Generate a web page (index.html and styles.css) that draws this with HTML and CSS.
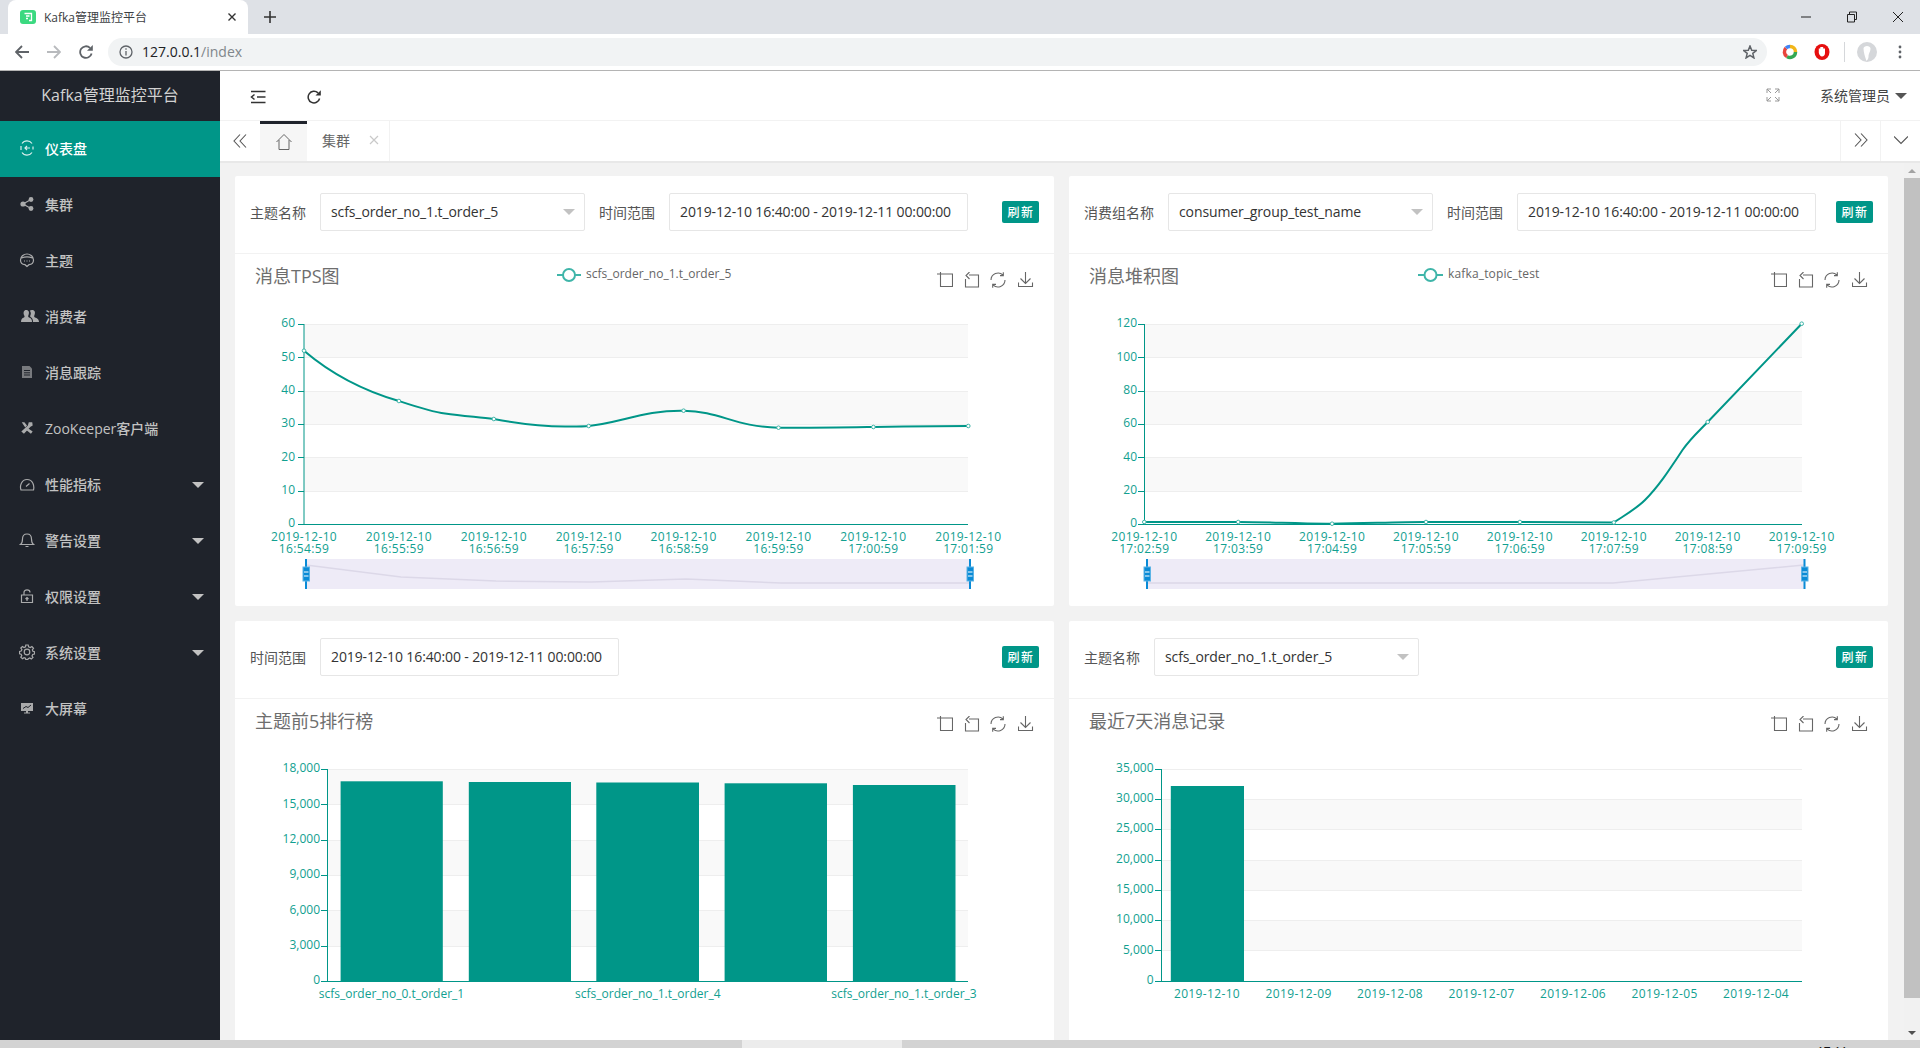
FILE: index.html
```html
<!DOCTYPE html>
<html lang="zh-CN">
<head>
<meta charset="utf-8">
<title>Kafka管理监控平台</title>
<link rel="stylesheet" href="styles.css">
</head>
<body>
<svg class="defs" width="0" height="0">
  <symbol id="tb-zoom" viewBox="0 0 16 16"><path d="M3.5 0V14.5H15.5V2H0"/></symbol>
  <symbol id="tb-back" viewBox="0 0 16 16"><path d="M5 3H14.5V15H1.500V7M5.500 0L2 3.500L5.500 7"/></symbol>
  <symbol id="tb-restore" viewBox="0 0 16 16"><path d="M1 8A7 7 0 0 1 13 3.200M15 8A7 7 0 0 1 3 12.800M13.300 .3V3.600H10M2.700 15.700V12.400H6"/></symbol>
  <symbol id="tb-save" viewBox="0 0 16 16"><path d="M7.500 0V11.500M2.500 6.500L7.500 11.500L12.500 6.500M.5 10.500V14.500H14.500V10.500"/></symbol>
</svg>

<div class="strip">
  <div class="tab-active">
    <svg class="favicon" viewBox="0 0 16 14"><rect width="16" height="14" rx="3" fill="#3bd980"/><path d="M4.500 3.500H11.500V10.500H9M6 6H9.500M6 8.500H8" fill="none" stroke="#fff" stroke-width="1.300"/></svg>
    <span class="tab-title">Kafka管理监控平台</span>
    <svg class="tab-x" viewBox="0 0 8 8"><path d="M.5 .5L7.500 7.500M7.500 .5L.5 7.500"/></svg>
  </div>
  <svg class="tab-plus" viewBox="0 0 12 12"><path d="M6 0V12M0 6H12"/></svg>
  <div class="win">
    <svg viewBox="0 0 12 12"><path d="M1 6H11"/></svg>
    <svg viewBox="0 0 12 12"><path d="M1.500 3.500H8.500V11H1.500ZM3.500 3.500V1H10.500V8.500H8.500"/></svg>
    <svg viewBox="0 0 12 12"><path d="M1 1L11 11M11 1L1 11"/></svg>
  </div>
</div>

<div class="toolbar">
  <svg class="nav-ic" viewBox="0 0 14 14"><path d="M14 7H1.500M7 1L1 7L7 13"/></svg>
  <svg class="nav-ic nav-off" viewBox="0 0 14 14"><path d="M0 7H12.500M7 1L13 7L7 13"/></svg>
  <svg class="nav-ic" viewBox="0 0 14 14"><path d="M12.600 8.500A5.800 5.800 0 1 1 11 2.900"/><path class="solid" d="M8 5.800H13.800V0Z"/></svg>
  <div class="omnibox">
    <svg class="info" viewBox="0 0 14 14"><circle cx="7" cy="7" r="6"/><path d="M7 6V10.500M7 3.200V4.800"/></svg>
    <span class="url">127.0.0.1<em>/index</em></span>
    <svg class="star" viewBox="0 0 14 14"><path d="M7 1L8.700 5.200L13.300 5.500L9.800 8.400L10.900 12.900L7 10.400L3.100 12.900L4.200 8.400L.7 5.500L5.300 5.200Z"/></svg>
  </div>
  <svg class="ext ext-ring" viewBox="0 0 16 16"><path d="M8 2.500A5.500 5.500 0 0 1 13.500 8" stroke="#f2b619"/><path d="M13.500 8A5.500 5.500 0 0 1 5 12.600" stroke="#33a853"/><path d="M5 12.600A5.500 5.500 0 0 1 4 4" stroke="#e8453c"/><path d="M4 4A5.500 5.500 0 0 1 8 2.500" stroke="#4285f4"/></svg>
  <svg class="ext ext-stop" viewBox="0 0 16 16"><ellipse cx="8" cy="8" rx="7.500" ry="8" fill="#e60f0f"/><path d="M4.800 7V4.500H6.300V3H9.200V4.500H11V9C11 11.200 9.800 12.500 8 12.500C6.500 12.500 5.500 11 4.800 9Z" fill="#fff"/></svg>
  <span class="sep"></span>
  <svg class="avatar" viewBox="0 0 20 20"><ellipse cx="10" cy="10" rx="10" ry="10" fill="#d5d7da"/><path d="M6.500 6.500C6.500 3 13.500 3 13.500 6.500C13.500 10 11.500 11 11.500 15C11.500 17 10 18 9.500 19C8 15 6.500 10 6.500 6.500Z" fill="#fff"/></svg>
  <svg class="dots" viewBox="0 0 4 14"><circle cx="2" cy="2" r="1.400"/><circle cx="2" cy="7" r="1.400"/><circle cx="2" cy="12" r="1.400"/></svg>
</div>

<div class="app">
  <aside class="sidebar">
    <div class="logo">Kafka管理监控平台</div>
    <nav class="menu">
      <a class="item active"><svg class="mi" viewBox="0 0 16 16"><path class="st" d="M13 3.500A6 6 0 0 0 3 3.500M3 12.500A6 6 0 0 0 13 12.500M2 6V10M14 6.500V9.500M11 8H6M8 6L6 8L8 10"/></svg><span>仪表盘</span></a>
      <a class="item"><svg class="mi" viewBox="0 0 16 16"><circle cx="12" cy="3.500" r="2.400"/><circle cx="12" cy="12.500" r="2.400"/><circle cx="4" cy="8" r="2.600"/><path class="st" d="M12 3.500L4 8L12 12.500" stroke-width="1.400"/></svg><span>集群</span></a>
      <a class="item"><svg class="mi" viewBox="0 0 16 16"><path class="st" d="M8 14.500L6 12.700C3 12.500 1.500 10.500 1.500 8A6.500 6 0 0 1 14.500 8C14.500 10.500 13 12.500 10 12.700ZM2.500 6C6 4.500 10 4.500 13.500 6"/><path class="st" d="M5 9H6M7.500 9H8.500M10 9H11" stroke-width="1.500"/></svg><span>主题</span></a>
      <a class="item"><svg class="mi mi-wide" viewBox="0 0 18 14"><path d="M5 1C8 1 8.500 3.500 7.500 6C7 7.300 7 8 8 8.500C10 9.300 11 10 11 13H0C0 10 1 9.300 3 8.500C4 8 3.500 7 3 6C2 3.500 3 1 5 1Z"/><path d="M11 1C14 1 14.500 3.500 13.500 6C13 7.300 13 8 14 8.500C16 9.300 18 10 18 13H12C12 10 11 8.800 9.500 8C9 7.500 9 7 9.500 6C10.300 4 9.500 2.500 8.800 1.700C9.400 1.200 10 1 11 1Z"/></svg><span>消费者</span></a>
      <a class="item"><svg class="mi mi-dim" viewBox="0 0 16 16"><path d="M3 2H10.500L13 4.500V14H3Z"/><path class="cut" d="M5 6.500H11M5 8.800H11M5 11H11"/></svg><span>消息跟踪</span></a>
      <a class="item"><svg class="mi mi-tools" viewBox="0 0 16 16"><path d="M2 1.500L5 1.500L8 5L6 7.500ZM9.500 8.500L14.500 12L12.500 14.500L7.500 10.500Z"/><path d="M14 1.500L14.500 5L12 6.500L4.500 14.500L1.500 12L9 5L10 1.500Z"/></svg><span>ZooKeeper客户端</span></a>
      <a class="item"><svg class="mi" viewBox="0 0 16 16"><path class="st" d="M2 14H14.500C15.500 10 14 3.500 8 3.500C2.500 3.500 .5 10 2 14ZM7 10.500L10.500 7.500"/></svg><span>性能指标</span><i class="caret"></i></a>
      <a class="item"><svg class="mi" viewBox="0 0 16 16"><path class="st" d="M1.500 12.500C3 11.500 3.500 10 3.500 7C3.500 3.500 5.500 2 8 2C10.500 2 12.500 3.500 12.500 7C12.500 10 13 11.500 14.500 12.500ZM6.500 14.500H9.500"/></svg><span>警告设置</span><i class="caret"></i></a>
      <a class="item"><svg class="mi" viewBox="0 0 16 16"><path class="st" d="M2.500 7H13.500V14.500H2.500ZM5 7V4.500C5 1 11 1 11 4.500M8 13V9.500M6.500 11L8 9.500L9.500 11"/></svg><span>权限设置</span><i class="caret"></i></a>
      <a class="item"><svg class="mi" viewBox="0 0 16 16"><circle class="st" cx="8" cy="8" r="2.800"/><path class="st" d="M6.800 1H9.200L9.600 2.900L11.300 3.600L12.900 2.600L14.500 4.300L13.300 5.800L13.900 7.300L15.500 7.800V10L13.700 10.400L13 12L14 13.500L12.300 15L10.800 14L9.200 14.700L8.800 15.500H6.800L6.500 14.300L5 13.700L3.500 14.800L1.800 13.200L2.800 11.700L2.100 10.200L.5 9.800V7.500L2.200 7.100L2.900 5.500L1.800 4.100L3.400 2.500L5 3.500L6.500 2.800Z"/></svg><span>系统设置</span><i class="caret"></i></a>
      <a class="item"><svg class="mi" viewBox="0 0 16 16"><path d="M2 3H14V11H9V12.500H11V13.500H5V12.500H7V11H2Z"/><path class="cut" d="M4 8.500L7 6.500L9 7.500L12 5"/></svg><span>大屏幕</span></a>
    </nav>
  </aside>

  <main class="main">
    <header class="topbar">
      <svg class="tool-ic" viewBox="0 0 16 14"><path d="M1 1.500H15.500M7 7H15.500M1 12.500H15.500M4.500 4.500L1.500 7L4.500 9.500"/></svg>
      <svg class="tool-ic refresh" viewBox="0 0 14 14"><path d="M12.600 8.500A5.800 5.800 0 1 1 11 2.900"/><path class="solid" d="M8.500 5.500H13.800V.2Z"/></svg>
      <svg class="full-ic" viewBox="0 0 14 14"><path d="M1 5V1H5M1 1L5 5M13 5V1H9M13 1L9 5M1 9V13H5M1 13L5 9M13 9V13H9M13 13L9 9"/></svg>
      <span class="user">系统管理员</span><i class="caret caret-dark"></i>
    </header>
    <div class="tabs">
      <svg class="tabs-prev" viewBox="0 0 14 14"><path d="M7 .5L1 7L7 13.500M13 .5L7 7L13 13.500"/></svg>
      <div class="home-tab"><svg viewBox="0 0 16 16"><path d="M.5 8L8 .5L15.500 8M3 6V15.500H13V6"/></svg></div>
      <div class="page-tab"><span>集群</span><svg viewBox="0 0 10 10"><path d="M1 1L9 9M9 1L1 9"/></svg></div>
      <div class="tabs-end">
        <div class="tabs-btn"><svg viewBox="0 0 14 14"><path d="M1 .5L7 7L1 13.500M7 .5L13 7L7 13.500"/></svg></div>
        <div class="tabs-btn"><svg viewBox="0 0 14 14"><path d="M0 3.500L7 10.500L14 3.500"/></svg></div>
      </div>
    </div>

    <div class="body">
      <div class="grid">

        <section class="card">
          <div class="form">
            <label>主题名称</label>
            <div class="field select"><span>scfs_order_no_1.t_order_5</span><i></i></div>
            <label>时间范围</label>
            <div class="field date">2019-12-10 16:40:00 - 2019-12-11 00:00:00</div>
            <button class="btn">刷新</button>
          </div>
          <svg class="chart" viewBox="235 254 819 352">
            <text class="title" x="255" y="283">消息TPS图</text>
            <g class="legend"><path d="M557 275H581"/><circle cx="569" cy="275" r="6"/></g>
            <text class="legend-t" x="586" y="278">scfs_order_no_1.t_order_5</text>
            <g class="tb">
              <use href="#tb-zoom" x="937" y="272" width="16" height="16"/><use href="#tb-back" x="964" y="272" width="16" height="16"/><use href="#tb-restore" x="990" y="272" width="16" height="16"/><use href="#tb-save" x="1018" y="272" width="16" height="16"/>
            </g>
            <g class="band"><rect x="304" y="324.300" width="664" height="33.300"/><rect x="304" y="391" width="664" height="33.300"/><rect x="304" y="457.600" width="664" height="33.400"/></g>
            <path class="split" d="M304 324.500H968M304 357.500H968M304 391.500H968M304 424.500H968M304 457.500H968M304 491.500H968"/>
            <path class="axis" d="M304 324V525M298 324.500H304M298 357.500H304M298 391.500H304M298 424.500H304M298 457.500H304M298 491.500H304M298 524.500H968"/>
            <g class="yl"><text x="295" y="327">60</text><text x="295" y="361">50</text><text x="295" y="394">40</text><text x="295" y="427">30</text><text x="295" y="461">20</text><text x="295" y="494">10</text><text x="295" y="527">0</text></g>
            <g class="xl">
              <text x="304" y="541">2019-12-10<tspan x="304" dy="12">16:54:59</tspan></text>
              <text x="398.900" y="541">2019-12-10<tspan x="398.900" dy="12">16:55:59</tspan></text>
              <text x="493.800" y="541">2019-12-10<tspan x="493.800" dy="12">16:56:59</tspan></text>
              <text x="588.700" y="541">2019-12-10<tspan x="588.700" dy="12">16:57:59</tspan></text>
              <text x="683.600" y="541">2019-12-10<tspan x="683.600" dy="12">16:58:59</tspan></text>
              <text x="778.500" y="541">2019-12-10<tspan x="778.500" dy="12">16:59:59</tspan></text>
              <text x="873.400" y="541">2019-12-10<tspan x="873.400" dy="12">17:00:59</tspan></text>
              <text x="968.300" y="541">2019-12-10<tspan x="968.300" dy="12">17:01:59</tspan></text>
            </g>
            <path class="line" d="M304 350.700C336 378 368 392 398.900 401C420 408 432 412 445 413.500C462 416 478 417 493.800 419C515 423 545 427 570 426.500C578 426.500 584 426.500 588.700 426C620 423 645 410 683.600 410.700C720 411 735 427 778.500 427.700C810 428 840 427.500 873.400 427C905 426.500 936 426.200 968.300 426"/>
            <g class="pt"><circle cx="304" cy="350.700" r="1.800"/><circle cx="398.900" cy="401" r="1.800"/><circle cx="493.800" cy="419" r="1.800"/><circle cx="588.700" cy="426" r="1.800"/><circle cx="683.600" cy="410.700" r="1.800"/><circle cx="778.500" cy="427.700" r="1.800"/><circle cx="873.400" cy="427" r="1.800"/><circle cx="968.300" cy="426" r="1.800"/></g>
            <rect class="dz" x="306" y="559" width="664" height="30"/>
            <path class="dz-mini" d="M306 565L401 577L496 581L591 582L686 579L781 583L876 583L970 583"/>
            <g class="dz-h"><path d="M306 559V589M970 559V589"/><rect x="303" y="567" width="6.500" height="14"/><rect x="967" y="567" width="6.500" height="14"/></g>
            <path class="dz-c" d="M304 572H308.500M304 576H308.500M968 572H972.500M968 576H972.500"/>
          </svg>
        </section>

        <section class="card">
          <div class="form">
            <label>消费组名称</label>
            <div class="field select"><span>consumer_group_test_name</span><i></i></div>
            <label>时间范围</label>
            <div class="field date">2019-12-10 16:40:00 - 2019-12-11 00:00:00</div>
            <button class="btn">刷新</button>
          </div>
          <svg class="chart" viewBox="1069 254 819 352">
            <text class="title" x="1089" y="283">消息堆积图</text>
            <g class="legend"><path d="M1418 275H1443"/><circle cx="1430.500" cy="275" r="6"/></g>
            <text class="legend-t wide" x="1448" y="278">kafka_topic_test</text>
            <g class="tb">
              <use href="#tb-zoom" x="1771" y="272" width="16" height="16"/><use href="#tb-back" x="1798" y="272" width="16" height="16"/><use href="#tb-restore" x="1824" y="272" width="16" height="16"/><use href="#tb-save" x="1852" y="272" width="16" height="16"/>
            </g>
            <g class="band"><rect x="1144" y="324.300" width="658" height="33.300"/><rect x="1144" y="391" width="658" height="33.300"/><rect x="1144" y="457.600" width="658" height="33.400"/></g>
            <path class="split" d="M1144 324.500H1802M1144 357.500H1802M1144 391.500H1802M1144 424.500H1802M1144 457.500H1802M1144 491.500H1802"/>
            <path class="axis" d="M1144.500 324V525M1138 324.500H1144M1138 357.500H1144M1138 391.500H1144M1138 424.500H1144M1138 457.500H1144M1138 491.500H1144M1138 524.500H1802"/>
            <g class="yl"><text x="1137" y="327">120</text><text x="1137" y="361">100</text><text x="1137" y="394">80</text><text x="1137" y="427">60</text><text x="1137" y="461">40</text><text x="1137" y="494">20</text><text x="1137" y="527">0</text></g>
            <g class="xl">
              <text x="1144.300" y="541">2019-12-10<tspan x="1144.300" dy="12">17:02:59</tspan></text>
              <text x="1238.200" y="541">2019-12-10<tspan x="1238.200" dy="12">17:03:59</tspan></text>
              <text x="1332.100" y="541">2019-12-10<tspan x="1332.100" dy="12">17:04:59</tspan></text>
              <text x="1426" y="541">2019-12-10<tspan x="1426" dy="12">17:05:59</tspan></text>
              <text x="1519.900" y="541">2019-12-10<tspan x="1519.900" dy="12">17:06:59</tspan></text>
              <text x="1613.800" y="541">2019-12-10<tspan x="1613.800" dy="12">17:07:59</tspan></text>
              <text x="1707.700" y="541">2019-12-10<tspan x="1707.700" dy="12">17:08:59</tspan></text>
              <text x="1801.700" y="541">2019-12-10<tspan x="1801.700" dy="12">17:09:59</tspan></text>
            </g>
            <path class="line" d="M1144.300 522C1180 522 1210 522 1238.200 522C1270 522 1300 524 1332.100 523.700C1365 523.500 1395 522 1426 522L1519.900 522L1613.800 522.500C1625 515 1636 509 1645 500C1658 487 1668 472 1682.500 450C1691 438 1698 432 1707.700 422L1801.700 323.700"/>
            <g class="pt"><circle cx="1144.300" cy="522" r="1.800"/><circle cx="1238.200" cy="522" r="1.800"/><circle cx="1332.100" cy="523.700" r="1.800"/><circle cx="1426" cy="522" r="1.800"/><circle cx="1519.900" cy="522" r="1.800"/><circle cx="1613.800" cy="522.500" r="1.800"/><circle cx="1707.700" cy="422" r="1.800"/><circle cx="1801.700" cy="323.700" r="1.800"/></g>
            <rect class="dz" x="1147" y="559" width="658" height="30"/>
            <path class="dz-mini" d="M1147 583L1613 583L1804 565"/>
            <g class="dz-h"><path d="M1147 559V589M1804.500 559V589"/><rect x="1144" y="567" width="6.500" height="14"/><rect x="1801.500" y="567" width="6.500" height="14"/></g>
            <path class="dz-c" d="M1145 572H1149.500M1145 576H1149.500M1802.500 572H1807M1802.500 576H1807"/>
          </svg>
        </section>

        <section class="card">
          <div class="form">
            <label>时间范围</label>
            <div class="field date">2019-12-10 16:40:00 - 2019-12-11 00:00:00</div>
            <button class="btn">刷新</button>
          </div>
          <svg class="chart" viewBox="235 699 819 352">
            <text class="title" x="255" y="728">主题前5排行榜</text>
            <g class="tb">
              <use href="#tb-zoom" x="937" y="716" width="16" height="16"/><use href="#tb-back" x="964" y="716" width="16" height="16"/><use href="#tb-restore" x="990" y="716" width="16" height="16"/><use href="#tb-save" x="1018" y="716" width="16" height="16"/>
            </g>
            <g class="band"><rect x="328" y="769.300" width="640" height="35.300"/><rect x="328" y="840" width="640" height="35.300"/><rect x="328" y="910.600" width="640" height="35.400"/></g>
            <path class="split" d="M328 769.500H968M328 804.500H968M328 840.500H968M328 875.500H968M328 910.500H968M328 946.500H968"/>
            <g class="bars"><rect x="340.600" y="781.300" width="102.200" height="200"/><rect x="468.800" y="782" width="102.200" height="199.300"/><rect x="596.300" y="782.500" width="102.700" height="198.800"/><rect x="724.600" y="783.300" width="102.400" height="198"/><rect x="852.900" y="785" width="102.600" height="196.300"/></g>
            <path class="axis" d="M327.500 769V982M321 769.500H327M321 804.500H327M321 840.500H327M321 875.500H327M321 910.500H327M321 946.500H327M321 981.500H968"/>
            <g class="yl"><text x="320" y="772">18,000</text><text x="320" y="808">15,000</text><text x="320" y="843">12,000</text><text x="320" y="878">9,000</text><text x="320" y="914">6,000</text><text x="320" y="949">3,000</text><text x="320" y="984">0</text></g>
            <g class="xl xl-tight"><text x="391.500" y="998">scfs_order_no_0.t_order_1</text><text x="647.800" y="998">scfs_order_no_1.t_order_4</text><text x="904" y="998">scfs_order_no_1.t_order_3</text></g>
          </svg>
        </section>

        <section class="card">
          <div class="form">
            <label>主题名称</label>
            <div class="field select"><span>scfs_order_no_1.t_order_5</span><i></i></div>
            <button class="btn">刷新</button>
          </div>
          <svg class="chart" viewBox="1069 699 819 352">
            <text class="title" x="1089" y="728">最近7天消息记录</text>
            <g class="tb">
              <use href="#tb-zoom" x="1771" y="716" width="16" height="16"/><use href="#tb-back" x="1798" y="716" width="16" height="16"/><use href="#tb-restore" x="1824" y="716" width="16" height="16"/><use href="#tb-save" x="1852" y="716" width="16" height="16"/>
            </g>
            <g class="band"><rect x="1162" y="799.600" width="640" height="30.300"/><rect x="1162" y="860.100" width="640" height="30.300"/><rect x="1162" y="920.700" width="640" height="30.300"/></g>
            <path class="split" d="M1162 769.500H1802M1162 799.500H1802M1162 829.500H1802M1162 860.500H1802M1162 890.500H1802M1162 920.500H1802M1162 950.500H1802"/>
            <g class="bars"><rect x="1170.800" y="786" width="73.200" height="195.300"/></g>
            <path class="axis" d="M1161.500 769V982M1155 769.500H1161M1155 799.500H1161M1155 829.500H1161M1155 860.500H1161M1155 890.500H1161M1155 920.500H1161M1155 950.500H1161M1155 981.500H1802"/>
            <g class="yl"><text x="1153.500" y="772">35,000</text><text x="1153.500" y="802">30,000</text><text x="1153.500" y="832">25,000</text><text x="1153.500" y="863">20,000</text><text x="1153.500" y="893">15,000</text><text x="1153.500" y="923">10,000</text><text x="1153.500" y="954">5,000</text><text x="1153.500" y="984">0</text></g>
            <g class="xl"><text x="1207" y="998">2019-12-10</text><text x="1298.600" y="998">2019-12-09</text><text x="1390" y="998">2019-12-08</text><text x="1481.600" y="998">2019-12-07</text><text x="1573" y="998">2019-12-06</text><text x="1664.600" y="998">2019-12-05</text><text x="1756" y="998">2019-12-04</text></g>
          </svg>
        </section>

      </div>
      <div class="scrollbar">
        <div class="sb-btn"><i class="up"></i></div>
        <div class="sb-thumb"></div>
        <div class="sb-fill"></div>
        <div class="sb-btn"><i class="down"></i></div>
      </div>
    </div>
  </main>
</div>

<footer class="taskbar">
  <div class="tb-seg"></div>
  <div class="tb-seg tb-on"></div>
  <div class="tb-seg tb-rest"><span class="clock">17:11</span></div>
</footer>
</body>
</html>
```
FILE: styles.css
```css
* { box-sizing: border-box; }
html, body { margin: 0; height: 1048px; overflow: hidden; }
body {
  display: flex;
  flex-direction: column;
  font-family: "Open Sans", "Noto Sans CJK SC", sans-serif;
  font-size: 14px;
  color: #333;
  background: #fff;
}
.defs { position: absolute; }
symbol path { fill: none; }

/* browser chrome */
.strip { height: 34px; flex: none; background: #dee1e6; display: flex; align-items: flex-end; padding-left: 8px; }
.tab-active { width: 240px; height: 34px; background: #fff; border-radius: 8px 8px 0 0; display: flex; align-items: center; padding: 0 12px; }
.favicon { width: 16px; height: 14px; flex: none; }
.tab-title { margin-left: 8px; font-size: 12px; color: #3c4043; flex: 1; white-space: nowrap; }
.tab-x { width: 8px; height: 8px; fill: none; stroke: #333; stroke-width: 1.4; }
.tab-plus { width: 12px; height: 12px; margin: 0 0 11px 16px; fill: none; stroke: #333; stroke-width: 1.6; }
.win { margin-left: auto; height: 34px; display: flex; align-items: center; gap: 34px; padding-right: 16px; }
.win svg { width: 12px; height: 12px; fill: none; stroke: #222; stroke-width: 1; }
.toolbar { height: 37px; flex: none; background: #fff; border-bottom: 1px solid #b4b4b4; display: flex; align-items: center; padding: 0 0 1px 15px; }
.nav-ic { width: 14px; height: 14px; margin-right: 18px; fill: none; stroke: #5f6368; stroke-width: 1.8; flex: none; }
.nav-off { stroke: #b8babd; }
.solid { fill: #5f6368; stroke: none; }
.omnibox { width: 1659px; height: 28px; margin-left: -3px; border-radius: 14px; background: #f1f3f4; display: flex; align-items: center; padding: 0 10px 0 11px; flex: none; }
.info { width: 14px; height: 14px; fill: none; stroke: #5f6368; stroke-width: 1.300; }
.url { margin-left: 9px; font-size: 14px; color: #202124; }
.url em { font-style: normal; color: #80868b; }
.star { width: 14px; height: 14px; margin-left: auto; fill: none; stroke: #5f6368; stroke-width: 1.500; }
.ext { width: 16px; height: 16px; flex: none; }
.ext-ring { margin-left: 15px; fill: none; stroke-width: 3.5; }
.ext-stop { margin-left: 16px; }
.sep { width: 1px; height: 20px; background: #d5d7da; margin: 0 12px 0 14px; flex: none; }
.avatar { width: 20px; height: 20px; flex: none; }
.dots { width: 4px; height: 14px; margin-left: 21px; fill: #5f6368; flex: none; }

/* app shell */
.app { flex: 1; min-height: 0; display: flex; }
.sidebar { width: 220px; flex: none; background: #1f232b; color: #c2c2c2; }
.logo { height: 50px; line-height: 48px; text-align: center; font-size: 16px; color: #d2d2d2; }
.menu { display: flex; flex-direction: column; }
.item { height: 56px; display: flex; align-items: center; padding: 0 0 2px 19px; position: relative; font-size: 14px; font-weight: 500; }
.item.active { background: #009688; color: #fff; }
.item span { margin-left: 10px; white-space: nowrap; }
.mi { width: 16px; height: 16px; flex: none; fill: currentColor; opacity: .85; }
.mi-wide { width: 18px; height: 14px; margin-left: 2px; margin-right: -4px; }
.mi-dim { opacity: .55; }
.mi-tools { width: 14px; height: 14px; margin: 0 1px 0 1px; }
.mi .st { fill: none; stroke: currentColor; stroke-width: 1.2; }
.mi .cut { fill: none; stroke: #1f232b; stroke-width: 1; }
.caret { position: absolute; right: 16px; top: 50%; margin-top: -3px; border: 6px solid transparent; border-top: 6px solid #c2c2c2; border-bottom: 0; }

.main { flex: 1; min-width: 0; display: flex; flex-direction: column; }
.topbar { height: 50px; flex: none; border-bottom: 1px solid #f2f2f2; display: flex; align-items: center; padding: 0 0 0 30px; position: relative; }
.tool-ic { width: 16px; height: 14px; margin-top: 2px; fill: none; stroke: #333; stroke-width: 1.5; flex: none; }
.refresh { width: 14px; margin-left: 41px; }
.refresh .solid { fill: #333; }
.full-ic { width: 14px; height: 14px; margin-left: auto; margin-bottom: 2px; fill: none; stroke: #999; stroke-width: 1; flex: none; }
.user { margin-left: 40px; margin-right: 30px; margin-bottom: 2px; color: #444; font-size: 14px; }
.caret-dark { right: 13px; border-top-color: #555; border-width: 6px; border-bottom: 0; }

.tabs { height: 42px; flex: none; background: #fff; border-bottom: 2px solid #e8e8e8; display: flex; align-items: stretch; }
.tabs-prev { width: 14px; height: 14px; margin: 13px 13px 0 13px; fill: none; stroke: #555; stroke-width: 1.100; flex: none; }
.home-tab { width: 47px; background: #f6f6f6; border-top: 3px solid #1f232b; display: flex; justify-content: center; padding-top: 10px; flex: none; }
.home-tab svg { width: 16px; height: 16px; fill: none; stroke: #666; stroke-width: 1; }
.page-tab { width: 83px; border-right: 1px solid #f2f2f2; display: flex; align-items: center; padding: 0 0 2px 15px; color: #666; flex: none; }
.page-tab svg { width: 10px; height: 10px; margin-left: 19px; fill: none; stroke: #c9c9c9; stroke-width: 1.200; }
.tabs-end { margin-left: auto; display: flex; }
.tabs-btn { width: 40px; border-left: 1px solid #f2f2f2; display: flex; align-items: center; justify-content: center; padding-bottom: 2px; }
.tabs-btn svg { width: 14px; height: 14px; fill: none; stroke: #555; stroke-width: 1.100; }

.body { flex: 1; min-height: 0; display: flex; background: #f2f2f2; overflow: hidden; }
.grid { flex: 1; min-width: 0; padding: 13px 16px 0 15px; display: grid; grid-template-columns: 819px 819px; grid-auto-rows: 430px; column-gap: 15px; row-gap: 15px; }
.card { background: #fff; border-radius: 2px; display: flex; flex-direction: column; }
.form { height: 78px; flex: none; border-bottom: 1px solid #f2f2f2; display: flex; align-items: center; padding: 0 15px 6px; }
.form label { color: #555; margin-right: 14px; white-space: nowrap; }
.field { height: 38px; border: 1px solid #e6e6e6; border-radius: 2px; color: #333; font-size: 14px; line-height: 36px; margin-right: 14px; white-space: nowrap; flex: none; }
.select { width: 265px; padding: 0 9px 0 10px; display: flex; align-items: center; justify-content: space-between; letter-spacing: -.1px; }
.select i { border: 6px solid transparent; border-top: 6px solid #c2c2c2; border-bottom: 0; }
.date { width: 299px; padding-left: 10px; letter-spacing: -.12px; }
.btn { margin-left: auto; width: 37px; height: 22px; padding: 0 0 0 1px; border: 0; border-radius: 2px; background: #009688; color: #fff; font: 500 12px "Open Sans", "Noto Sans CJK SC", sans-serif; letter-spacing: 1.500px; }

/* charts */
.chart { display: block; width: 819px; height: 352px; flex: none; }
.chart text { font-family: "Open Sans", "Noto Sans CJK SC", sans-serif; }
.title { font-size: 18px; fill: #6e6e6e; }
.legend { fill: #fff; stroke: #3fb5a9; stroke-width: 2; }
.legend-t { font-size: 12px; fill: #666; }
.wide { letter-spacing: .15px; }
.tb { fill: none; stroke: #666; stroke-width: 1.100; }
.band { fill: #f9f9f9; }
.split { stroke: #eee; stroke-width: 1; fill: none; }
.axis { stroke: #009688; stroke-width: 1; fill: none; }
.yl text { font-size: 12px; fill: #11a090; text-anchor: end; }
.xl text { font-size: 12px; fill: #11a090; text-anchor: middle; letter-spacing: .35px; }
.xl-tight text { letter-spacing: 0; }
.line { fill: none; stroke: #009688; stroke-width: 2; }
.pt { fill: #fff; stroke: #3fb5a9; stroke-width: 1; }
.bars { fill: #009688; }
.dz { fill: #eeebf7; }
.dz-mini { fill: none; stroke: #dcd8e8; stroke-width: 1.500; }
.dz-h { fill: #0a8bd6; stroke: #0a8bd6; stroke-width: 2; }
.dz-h rect { stroke: #5cb4e6; stroke-width: 1; }
.dz-c { fill: none; stroke: #fff; stroke-width: 1; }

/* scrollbar */
.scrollbar { width: 16px; flex: none; background: #f1f1f1; display: flex; flex-direction: column; }
.sb-btn { height: 15px; flex: none; display: flex; align-items: center; justify-content: center; }
.sb-thumb { height: 820px; flex: none; background: #c1c1c1; }
.sb-fill { flex: 1; }
.up { border: 4px solid transparent; border-bottom: 4px solid #a3a3a3; border-top: 0; }
.down { border: 4px solid transparent; border-top: 4px solid #505050; border-bottom: 0; }

/* bottom sliver */
.taskbar { height: 8px; flex: none; display: flex; overflow: hidden; background: #d3d3d3; }
.tb-seg { width: 742px; flex: none; }
.tb-on { width: 160px; background: #ececec; }
.tb-rest { flex: 1; width: auto; padding: 5px 0 0 915px; font-size: 12px; line-height: 14px; color: #111; border-right: 3px solid #d3d3d3; }
```
